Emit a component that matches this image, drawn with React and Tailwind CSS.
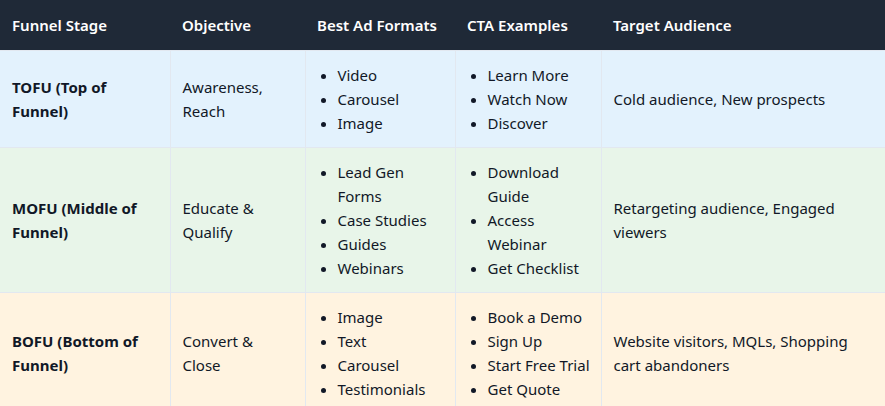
const rows = [
  {
    bg: "bg-[#e3f2fd]",
    stage: "TOFU (Top of Funnel)",
    objective: "Awareness, Reach",
    formats: ["Video", "Carousel", "Image"],
    ctas: ["Learn More", "Watch Now", "Discover"],
    audience: "Cold audience, New prospects",
  },
  {
    bg: "bg-[#e8f5e9]",
    stage: "MOFU (Middle of Funnel)",
    objective: "Educate & Qualify",
    formats: ["Lead Gen Forms", "Case Studies", "Guides", "Webinars"],
    ctas: ["Download Guide", "Access Webinar", "Get Checklist"],
    audience: "Retargeting audience, Engaged viewers",
  },
  {
    bg: "bg-[#fff3e0]",
    stage: "BOFU (Bottom of Funnel)",
    objective: "Convert & Close",
    formats: ["Image", "Text", "Carousel", "Testimonials"],
    ctas: ["Book a Demo", "Sign Up", "Start Free Trial", "Get Quote"],
    audience: "Website visitors, MQLs, Shopping cart abandoners",
  },
];

const headers = ["Funnel Stage", "Objective", "Best Ad Formats", "CTA Examples", "Target Audience"];

// these fit on one line in the original, Noto is a hair wider
const noWrap = ["Start Free Trial", "Testimonials", "Case Studies", "Get Checklist"];

function BulletList({ items }) {
  return (
    <ul className="list-disc pl-5 m-0">
      {items.map((item) => (
        <li key={item} className={noWrap.includes(item) ? "whitespace-nowrap" : ""}>
          {item}
        </li>
      ))}
    </ul>
  );
}

export default function App() {
  return (
    <div className="w-[885px] h-[406px] overflow-hidden bg-white font-['Noto_Sans',sans-serif] text-[15px] leading-6 text-[#111827]">
      <table className="w-full table-fixed border-collapse">
        <colgroup>
          <col className="w-[170px]" />
          <col className="w-[135px]" />
          <col className="w-[150px]" />
          <col className="w-[146px]" />
          <col />
        </colgroup>
        <thead>
          <tr className="bg-[#1f2937] text-white">
            {headers.map((h) => (
              <th key={h} className="text-left font-semibold px-3 py-[13px]">
                {h}
              </th>
            ))}
          </tr>
        </thead>
        <tbody>
          {rows.map((r) => (
            <tr key={r.stage} className={r.bg}>
              <td className="border border-[#e2e8f0] border-l-0 px-3 py-3 font-bold">{r.stage}</td>
              <td className="border border-[#e2e8f0] px-3 py-3">{r.objective}</td>
              <td className="border border-[#e2e8f0] px-3 py-3">
                <BulletList items={r.formats} />
              </td>
              <td className="border border-[#e2e8f0] px-3 py-3">
                <BulletList items={r.ctas} />
              </td>
              <td className="border border-[#e2e8f0] border-r-0 px-3 py-3">{r.audience}</td>
            </tr>
          ))}
        </tbody>
      </table>
    </div>
  );
}
